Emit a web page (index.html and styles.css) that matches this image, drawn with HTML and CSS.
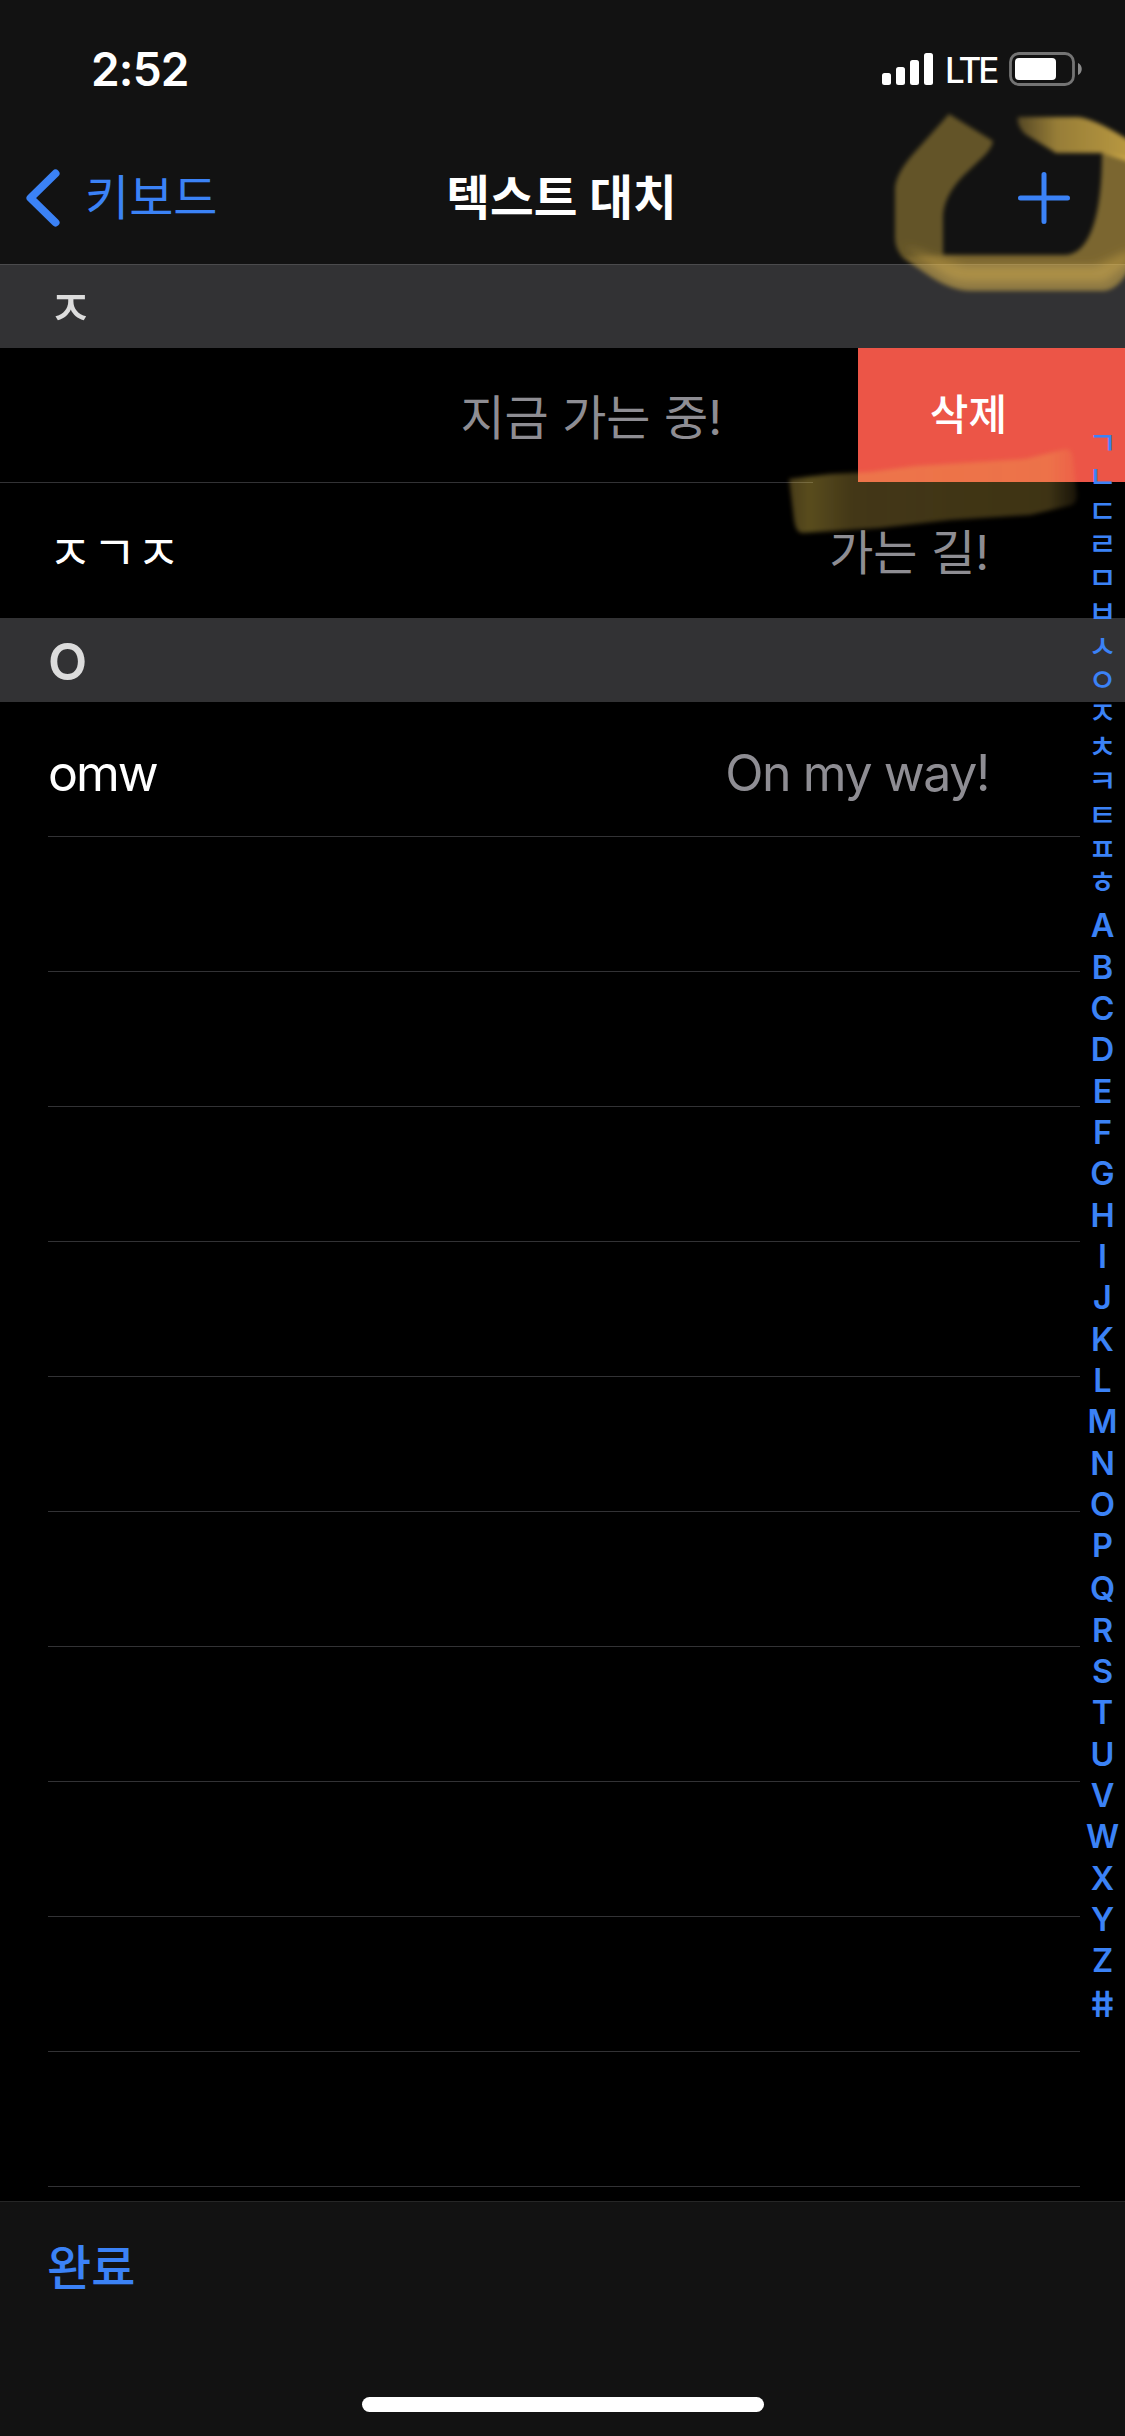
FILE: index.html
```html
<!DOCTYPE html>
<html lang="ko">
<head>
<meta charset="utf-8">
<title>텍스트 대치</title>
<link rel="stylesheet" href="styles.css">
</head>
<body>
<div class="screen">
  <header class="top">
    <div class="status">
      <span class="time">2:52</span>
      <div class="status-right">
        <svg class="signal" width="52" height="33" viewBox="0 0 52 33" fill="#fff">
          <rect x="0" y="20" width="9" height="12" rx="2.5"/>
          <rect x="14" y="14" width="9" height="18" rx="2.5"/>
          <rect x="28" y="7" width="9" height="25" rx="2.5"/>
          <rect x="42" y="0" width="9" height="32" rx="2.5"/>
        </svg>
        <span class="lte">LTE</span>
        <svg class="battery" width="74" height="34" viewBox="0 0 74 34">
          <rect x="1.5" y="1.5" width="63" height="31" rx="8.5" fill="none" stroke="#747474" stroke-width="2.8"/>
          <rect x="6" y="6" width="41" height="22" rx="4" fill="#fff"/>
          <path d="M69 11c5 2 5 10 0 12z" fill="#8a8a8a"/>
        </svg>
      </div>
    </div>
    <nav class="nav">
      <a class="back">
        <svg width="34" height="58" viewBox="0 0 34 58" fill="none" stroke="#3b82f6" stroke-width="8" stroke-linecap="round" stroke-linejoin="round"><path d="M29.500 4.500 4.500 29l25 24.500"/></svg>
        <span>키보드</span>
      </a>
      <h1 class="title">텍스트 대치</h1>
      <a class="add">
        <svg width="52" height="52" viewBox="0 0 52 52" stroke="#3b82f6" stroke-width="5" stroke-linecap="round"><path d="M26 2.500v47M2.500 26h47"/></svg>
      </a>
    </nav>
  </header>
  <main class="list">
    <h2 class="section first">ㅈ</h2>
    <div class="row swiped">
      <span class="phrase">지금 가는 중!</span>
      <button class="delete">삭제</button>
    </div>
    <div class="row last"><span class="shortcut">ㅈㄱㅈ</span><span class="phrase">가는 길!</span></div>
    <h2 class="section letter">O</h2>
    <div class="row latin"><span class="shortcut">omw</span><span class="phrase">On my way!</span></div>
    <div class="row"></div><div class="row"></div><div class="row"></div><div class="row"></div><div class="row"></div>
    <div class="row"></div><div class="row"></div><div class="row"></div><div class="row"></div><div class="row"></div>
  </main>
  <footer class="toolbar">
    <a class="done">완료</a>
    <div class="home"></div>
  </footer>
  <div class="index">
    <div class="index-ko"><span>ㄱ</span><span>ㄴ</span><span>ㄷ</span><span>ㄹ</span><span>ㅁ</span><span>ㅂ</span><span>ㅅ</span><span>ㅇ</span><span>ㅈ</span><span>ㅊ</span><span>ㅋ</span><span>ㅌ</span><span>ㅍ</span><span>ㅎ</span></div>
    <div class="index-en"><span>A</span><span>B</span><span>C</span><span>D</span><span>E</span><span>F</span><span>G</span><span>H</span><span>I</span><span>J</span><span>K</span><span>L</span><span>M</span><span>N</span><span>O</span><span>P</span><span class="q">Q</span><span>R</span><span>S</span><span>T</span><span>U</span><span>V</span><span>W</span><span>X</span><span>Y</span><span>Z</span><span class="hash">#</span></div>
  </div>
  <svg class="marker" width="1125" height="560" viewBox="0 0 1125 560">
    <defs>
      <filter id="soft" x="-10%" y="-10%" width="120%" height="120%"><feGaussianBlur stdDeviation="2.200"/></filter>
      <filter id="glow" x="-20%" y="-60%" width="140%" height="220%"><feGaussianBlur stdDeviation="5"/></filter>
      <linearGradient id="tail"><stop offset="0" stop-color="#f0c550" stop-opacity=".3"/><stop offset=".07" stop-color="#f0d050" stop-opacity=".37"/><stop offset=".22" stop-color="#f0c550" stop-opacity=".28"/><stop offset=".9" stop-color="#f0c550" stop-opacity=".26"/><stop offset="1" stop-color="#f0c550" stop-opacity=".1"/></linearGradient>
      <linearGradient id="start"><stop offset="0" stop-color="#f0c550" stop-opacity=".3"/><stop offset=".35" stop-color="#f0c550" stop-opacity=".6"/><stop offset="1" stop-color="#f0c550" stop-opacity=".75"/></linearGradient>
    </defs>
    <g filter="url(#soft)" fill="#f0c550">
      <path d="M949 114 993 141Q992 148 984 156L963 176Q944 196 943 216V255H943L902 257Q895 248 895 238V187Q897 172 914 153Z" fill-opacity=".37"/>
      <path d="M943 255H1066C1090 253 1102 215 1102 153L1130 158V268Q1118 291 1102 291H972Q950 291 925 273L902 257Z" fill-opacity=".47"/>
      <path d="M1018 117H1078Q1096 119 1130 141V162L1102 153H1056L1025 134Q1016 125 1018 117Z" fill="url(#start)"/>
    </g>
    <path d="M903 246 940 272Q953 283 972 282H1105L1130 262V250L1095 266H965L938 258Z" fill="#f0c550" fill-opacity=".32" filter="url(#glow)"/>
    <path d="M789 479 830 474 870 472 915 466 1025 459 1066 449Q1072 449 1073 458L1077 495Q1077 505 1068 506L1030 515 950 520 880 528 802 533Q796 533 794 520Z" fill="url(#tail)" filter="url(#soft)"/>
  </svg>
</div>
</body>
</html>
```
FILE: styles.css
```css
* { box-sizing: border-box; margin: 0; padding: 0; }
body { background: #000; }
.screen {
  position: relative;
  width: 1125px;
  height: 2436px;
  overflow: hidden;
  display: flex;
  flex-direction: column;
  background: #000;
  color: #fff;
  font-family: "Inter", "Noto Sans CJK KR", sans-serif;
}
.top { height: 265px; background: #121212; border-bottom: 1px solid #4b4b4d; }
.status { height: 132px; padding: 0 42px 0 91px; display: flex; justify-content: space-between; }
.time { padding-top: 39px; font-size: 46px; line-height: 60px; font-weight: 600; letter-spacing: -.8px; }
.status-right { display: flex; align-items: flex-start; padding-top: 52px; }
.signal { margin-top: 1px; }
.lte { width: 63px; margin-left: 11px; margin-top: -2px; font-size: 35px; line-height: 40px; font-weight: 500; letter-spacing: -3px; white-space: nowrap; }
.battery { margin-left: 1px; }
.nav { height: 132px; display: grid; grid-template-columns: 300px 1fr 300px; align-items: center; padding: 0 55px 0 26px; }
.back { display: flex; align-items: center; gap: 25px; color: #3b82f6; font-size: 48px; line-height: 60px; }
.back span { margin-top: -1px; }
.title { margin: -1px 0 0 27px; text-align: center; font-size: 47.500px; line-height: 60px; font-weight: 600; white-space: nowrap; }
.add { display: flex; justify-content: flex-end; }
.list { height: 1936px; overflow: hidden; }
.section { height: 84px; padding-left: 48px; background: #323234; color: #dcdcdc; font-size: 49px; line-height: 87px; font-weight: 500; }
.first { height: 83px; }
.letter { font-size: 51px; line-height: 87px; font-weight: 600; }
.row {
  height: 135px;
  margin-left: 48px;
  margin-right: 45px;
  padding: 4px 91px 0 0;
  border-bottom: 1px solid #323235;
  display: flex;
  align-items: center;
  justify-content: space-between;
  font-size: 48px;
  line-height: 60px;
}
.phrase { color: #8e8d93; }
.latin { font-size: 50px; letter-spacing: -1.400px; padding-top: 7px; }
.latin .shortcut { letter-spacing: -2px; }
.swiped { margin: 0; padding: 0; justify-content: flex-end; border: 0; background: linear-gradient(#323235, #323235) 0 100% / 813px 1px no-repeat; }
.swiped .phrase { padding-top: 4px; }
.delete { width: 267px; height: 134px; margin: 0 0 1px 136px; border: 0; background: #ec5547; color: #fff; font: 500 42px/128px "Noto Sans CJK KR", sans-serif; padding: 0 46px 6px 0; }
.last { border: 0; }
.toolbar { height: 235px; border-top: 1px solid #262626; background: #121212; display: flex; flex-direction: column; justify-content: space-between; }
.done { padding: 36px 0 0 47px; color: #3b82f6; font-size: 48px; line-height: 60px; font-weight: 500; }
.home { width: 402px; height: 15px; margin: 0 auto 24px; border-radius: 8px; background: #fff; }
.index { position: absolute; top: 424px; right: 0; width: 45px; color: #3b82f6; font-weight: 600; text-align: center; }
.index span { display: block; }
.index-ko { font: 500 31px/33.800px "Noto Sans CJK KR", sans-serif; }
.index-en { margin-top: 8px; font-size: 32.500px; line-height: 41.350px; }
.index-en .q { line-height: 43px; }
.index-en .hash { font-size: 36px; line-height: 44px; transform: skewX(9deg); }
.marker { position: absolute; top: 0; left: 0; }
```
